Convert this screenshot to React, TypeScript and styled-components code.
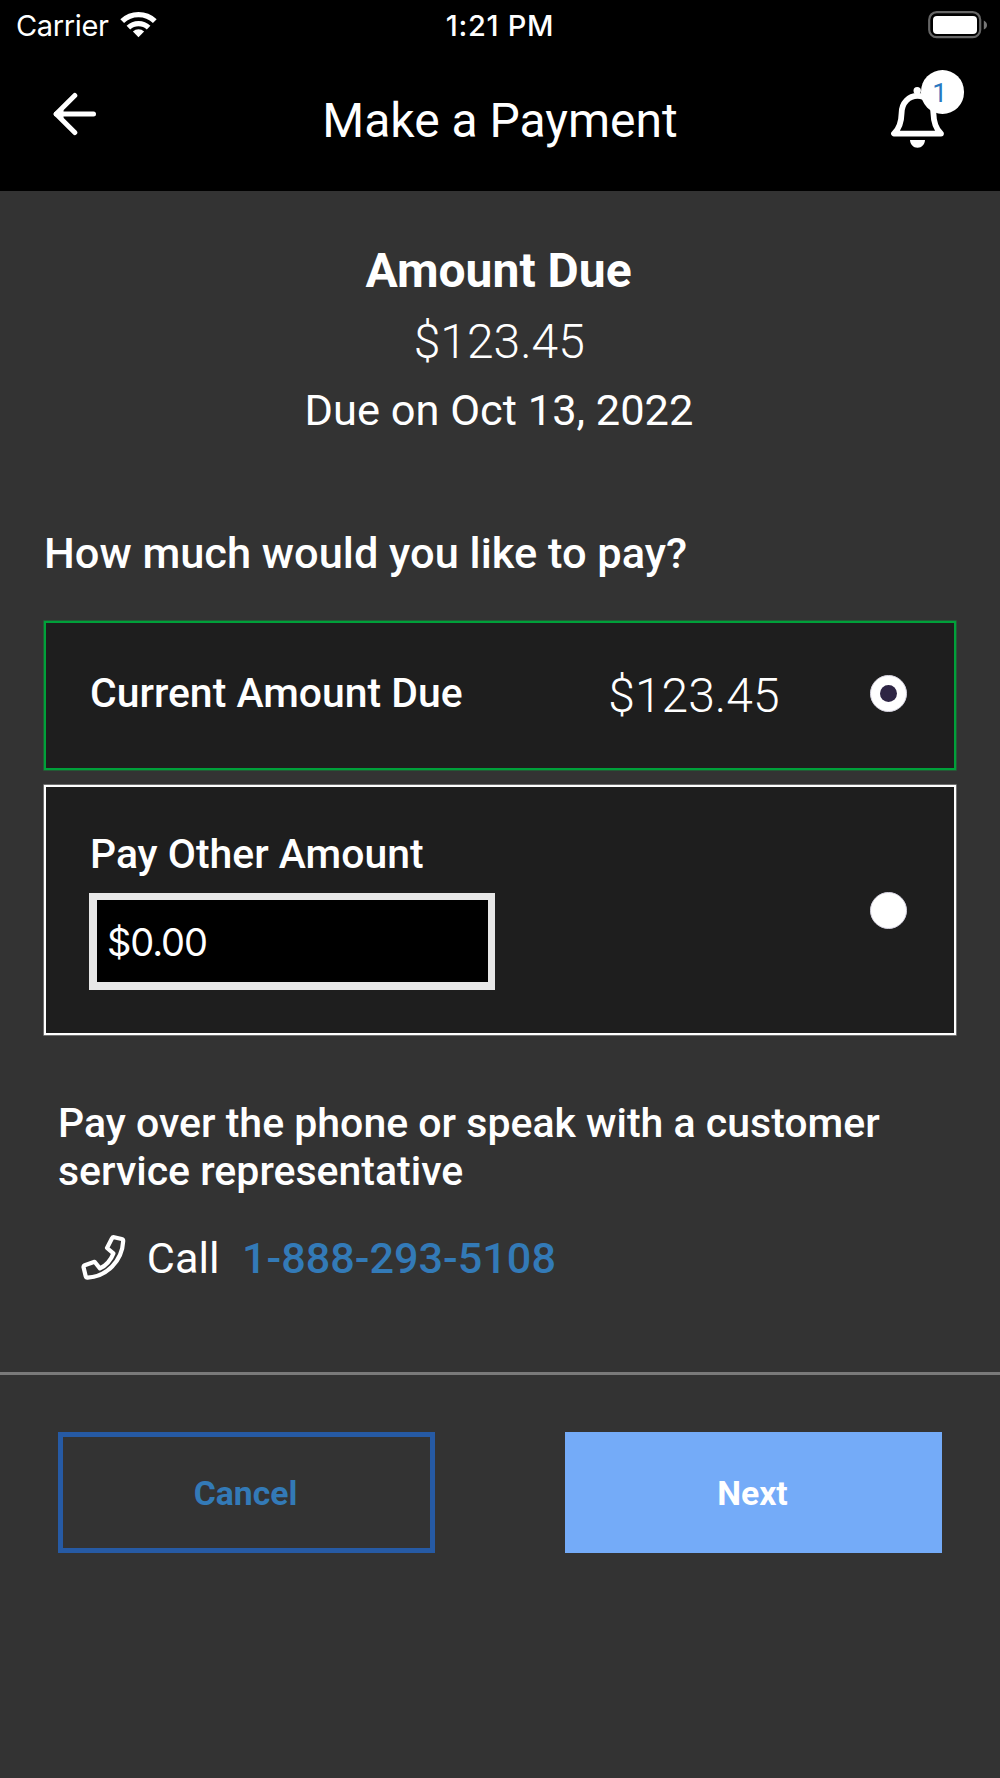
import React, { useState } from "react";
import styled, { createGlobalStyle } from "styled-components";

const Global = createGlobalStyle`
  *, *::before, *::after { box-sizing: border-box; }
  html, body { margin: 0; padding: 0; background: #333333; }
  body { font-family: Roboto, "Liberation Sans", sans-serif; color: #ffffff; }
`;

const Screen = styled.div`
  width: 1000px;
  min-height: 1778px;
  background: #333333;
  display: flex;
  flex-direction: column;
`;

const Header = styled.header`
  background: #000000;
  height: 191px;
  display: flex;
  flex-direction: column;
`;

const StatusBar = styled.div`
  height: 52px;
  padding: 0 13px 0 16px;
  display: grid;
  grid-template-columns: 1fr auto 1fr;
  align-items: center;
`;

const Carrier = styled.div`
  display: flex;
  align-items: center;
  gap: 11px;
`;

const StatusText = styled.span<{ $weight: number; $spacing: number }>`
  font-family: Inter, sans-serif;
  font-size: 29px;
  line-height: 36px;
  font-weight: ${(p) => p.$weight};
  letter-spacing: ${(p) => p.$spacing}px;
`;

const Clock = styled(StatusText)`
  margin-right: 3px;
`;

const WifiIcon = styled.svg`
  margin-top: -5px;
`;

const BatteryIcon = styled.svg`
  justify-self: end;
  margin-top: -3px;
`;

const NavBar = styled.div`
  flex: 1;
  padding: 18px 36px 0 53px;
  display: grid;
  grid-template-columns: 1fr auto 1fr;
  align-items: start;
`;

const IconButton = styled.button`
  appearance: none;
  border: 0;
  padding: 0;
  background: transparent;
  color: inherit;
  display: flex;
  cursor: pointer;
`;

const BackButton = styled(IconButton)`
  justify-self: start;
  margin-top: 22px;
`;

const Title = styled.h1`
  margin: 23px 17px 0 0;
  font-size: 48px;
  line-height: 56px;
  font-weight: 400;
`;

const BellButton = styled(IconButton)`
  position: relative;
  justify-self: end;
  width: 74px;
  height: 80px;
  padding-top: 16px;
`;

const Badge = styled.span`
  position: absolute;
  top: 0;
  right: 0;
  width: 43.5px;
  height: 43.5px;
  padding: 2px 5px 0 0;
  border-radius: 50%;
  background: #ffffff;
  color: #2a78c0;
  display: flex;
  align-items: center;
  justify-content: center;
  font-family: Roboto, sans-serif;
  font-size: 26.7px;
  line-height: 30px;
`;

const Summary = styled.section`
  margin-top: 44px;
  display: flex;
  flex-direction: column;
  align-items: center;
`;

const SummaryTitle = styled.h2`
  margin: 0 3px 0 0;
  font-size: 48px;
  line-height: 71px;
  font-weight: 700;
`;

const Amount = styled.span`
  margin-right: 1.5px;
  font-size: 48px;
  line-height: 72px;
  font-weight: 300;
`;

const DueDate = styled.span`
  margin-right: 2px;
  font-size: 43.4px;
  line-height: 66px;
`;

const Options = styled.section`
  padding: 78px 44px 0;
  display: flex;
  flex-direction: column;
`;

const Question = styled.h3`
  margin: 0 0 35px;
  font-size: 43.4px;
  line-height: 64px;
  font-weight: 500;
`;

const OptionCard = styled.label<{ $selected: boolean; $height: number }>`
  height: ${(p) => p.$height}px;
  margin-bottom: 15px;
  padding: 0 47px 0 44px;
  border: 2px solid ${(p) => (p.$selected ? "#00a03a" : "#ffffff")};
  box-shadow: 0 0 0 0.67px ${(p) => (p.$selected ? "#1d6e38" : "#8f8f8f")};
  background: #1e1e1e;
  display: flex;
  align-items: center;
  justify-content: space-between;
`;

const OptionLabel = styled.span<{ $lift?: number }>`
  margin-bottom: ${(p) => p.$lift ?? 0}px;
  font-size: 40.9px;
  line-height: 47px;
  font-weight: 500;
`;

const OptionEnd = styled.span`
  display: flex;
  align-items: center;
  gap: 89px;
`;

const OtherAmount = styled.div`
  padding: 2px 0 1px;
  display: flex;
  flex-direction: column;
  gap: 15px;
`;

const AmountInput = styled.input`
  width: 406px;
  height: 97px;
  margin-left: -1px;
  padding: 1px 0 0 10px;
  border: solid #e7e7e7;
  border-width: 7px 7px 8px 8px;
  border-radius: 0;
  background: #000000;
  color: #ffffff;
  font-family: Inter, sans-serif;
  font-size: 38px;
  letter-spacing: -1.1px;
  outline: none;
`;

const HiddenRadio = styled.input`
  appearance: none;
  position: absolute;
  width: 0;
  height: 0;
  margin: 0;
`;

const RadioRing = styled.span<{ $on: boolean; $lift?: number }>`
  width: 37px;
  height: 37px;
  margin-bottom: ${(p) => p.$lift ?? 0}px;
  border-radius: 50%;
  background: #ffffff;
  border: 1px solid #d8d5e2;
  display: flex;
  align-items: center;
  justify-content: center;

  &::after {
    content: "";
    width: 17px;
    height: 17px;
    border-radius: 50%;
    background: ${(p) => (p.$on ? "#2e2544" : "transparent")};
  }
`;

const Help = styled.section`
  margin-top: 50px;
  padding: 0 58px;
  display: flex;
  flex-direction: column;
`;

const HelpText = styled.p`
  margin: 0;
  font-size: 41px;
  line-height: 47.5px;
  font-weight: 500;
`;

const CallRow = styled.div`
  margin-top: 31px;
  padding-left: 23px;
  height: 64px;
  display: flex;
  align-items: center;
  font-size: 43.2px;
`;

const PhoneIcon = styled.svg`
  margin-bottom: 2px;
`;

const CallLabel = styled.span`
  margin: 0 22.5px 0 20.8px;
`;

const PhoneLink = styled.a`
  color: #337ab7;
  font-weight: 500;
  text-decoration: none;
`;

const Footer = styled.footer`
  margin-top: 82px;
  border-top: 3px solid #7a7a7a;
  padding: 57px 58px 0;
  display: flex;
  justify-content: space-between;
`;

const ActionButton = styled.button<{ $primary?: boolean }>`
  appearance: none;
  width: 377px;
  height: 121px;
  padding: 2px 2px 0 0;
  border: 5px solid ${(p) => (p.$primary ? "#74abf8" : "#265aa4")};
  border-radius: 0;
  background: ${(p) => (p.$primary ? "#74abf8" : "transparent")};
  color: ${(p) => (p.$primary ? "#ffffff" : "#337ab7")};
  font-family: Roboto, sans-serif;
  font-size: 33.7px;
  font-weight: 700;
  cursor: pointer;
`;

function Wifi() {
  return (
    <WifiIcon width="37" height="28" viewBox="0 0 37 28" fill="none" stroke="#fff">
      <path d="M2.2 11.1 A23.8 23.8 0 0 1 34.8 11.1" strokeWidth="5.4" />
      <path d="M8.4 17.7 A14.6 14.6 0 0 1 28.6 17.7" strokeWidth="5.2" />
      <path d="M18.5 27.2 L12.9 21.4 A8.2 8.2 0 0 1 24.1 21.4 Z" fill="#fff" stroke="none" />
    </WifiIcon>
  );
}

function Battery() {
  return (
    <BatteryIcon width="59" height="28" viewBox="0 0 59 28">
      <rect x="1.2" y="1.2" width="51" height="25" rx="7.5" fill="none" stroke="#666" strokeWidth="2.2" />
      <rect x="5" y="5" width="44" height="18" rx="4" fill="#fff" />
      <path d="M55.8 9.4 Q59 11 59 14 Q59 17 55.8 18.6 Z" fill="#777" />
    </BatteryIcon>
  );
}

function Arrow() {
  return (
    <svg width="44" height="44" viewBox="0 0 44 44" fill="none" stroke="#fff" strokeWidth="5" strokeLinecap="round" strokeLinejoin="round">
      <path d="M21.8 3.4 L3.2 22 L21.8 40.6" />
      <path d="M3.2 22 H40.5" />
      <path d="M5 22 L10 18 V26 Z" fill="#fff" strokeWidth="1" />
    </svg>
  );
}

function Bell() {
  return (
    <svg width="55" height="64" viewBox="0 0 55 64" fill="none" stroke="#fff" strokeWidth="5.8" strokeLinejoin="round">
      <circle cx="27.2" cy="4.8" r="3.7" fill="#fff" stroke="none" />
      <path d="M4 47.6 H51 C45.5 42.6 43.6 36 43.4 27 C43.2 16.5 36 9.9 27.5 9.9 C19 9.9 11.8 16.5 11.6 27 C11.4 36 9.5 42.6 4 47.6 Z" />
      <path d="M20 54 H35 C34.6 58.6 31.8 61.7 27.5 61.7 C23.2 61.7 20.4 58.6 20 54 Z" fill="#fff" stroke="none" />
    </svg>
  );
}

function Phone() {
  return (
    <PhoneIcon width="45" height="45" viewBox="0 0 45 45" fill="none" stroke="#fff" strokeWidth="4.2" strokeLinejoin="round">
      <path d="M33.1 2.2 L40.7 4 Q42.3 4.4 42.2 6 C41.2 26 25.5 41.7 6.6 42.6 Q5.1 42.7 4.7 41.2 L2.6 32.5 Q2.2 30.9 3.7 30.2 L13.6 26.8 L18.9 33.4 C25.3 30.3 29.7 25.3 32.4 18.4 L26 13 L31 3.2 Q31.7 1.9 33.1 2.2 Z" />
    </PhoneIcon>
  );
}

export default function App() {
  const [choice, setChoice] = useState<"current" | "other">("current");
  const [other, setOther] = useState("$0.00");

  return (
    <Screen>
      <Global />
      <Header>
        <StatusBar>
          <Carrier>
            <StatusText $weight={400} $spacing={-0.35}>Carrier</StatusText>
            <Wifi />
          </Carrier>
          <Clock $weight={500} $spacing={0.7}>1:21 PM</Clock>
          <Battery />
        </StatusBar>
        <NavBar>
          <BackButton aria-label="Back">
            <Arrow />
          </BackButton>
          <Title>Make a Payment</Title>
          <BellButton aria-label="Notifications">
            <Bell />
            <Badge>1</Badge>
          </BellButton>
        </NavBar>
      </Header>

      <Summary>
        <SummaryTitle>Amount Due</SummaryTitle>
        <Amount>$123.45</Amount>
        <DueDate>Due on Oct 13, 2022</DueDate>
      </Summary>

      <Options>
        <Question>How much would you like to pay?</Question>
        <OptionCard $selected={choice === "current"} $height={149}>
          <OptionLabel $lift={5}>Current Amount Due</OptionLabel>
          <OptionEnd>
            <Amount>$123.45</Amount>
            <HiddenRadio type="radio" name="amount" checked={choice === "current"} onChange={() => setChoice("current")} />
            <RadioRing $on={choice === "current"} $lift={4} />
          </OptionEnd>
        </OptionCard>
        <OptionCard $selected={choice === "other"} $height={250}>
          <OtherAmount>
            <OptionLabel>Pay Other Amount</OptionLabel>
            <AmountInput value={other} onChange={(e) => setOther(e.target.value)} />
          </OtherAmount>
          <HiddenRadio type="radio" name="amount" checked={choice === "other"} onChange={() => setChoice("other")} />
          <RadioRing $on={choice === "other"} />
        </OptionCard>
      </Options>

      <Help>
        <HelpText>Pay over the phone or speak with a customer service representative</HelpText>
        <CallRow>
          <Phone />
          <CallLabel>Call</CallLabel>
          <PhoneLink href="tel:18882935108">1-888-293-5108</PhoneLink>
        </CallRow>
      </Help>

      <Footer>
        <ActionButton>Cancel</ActionButton>
        <ActionButton $primary>Next</ActionButton>
      </Footer>
    </Screen>
  );
}
